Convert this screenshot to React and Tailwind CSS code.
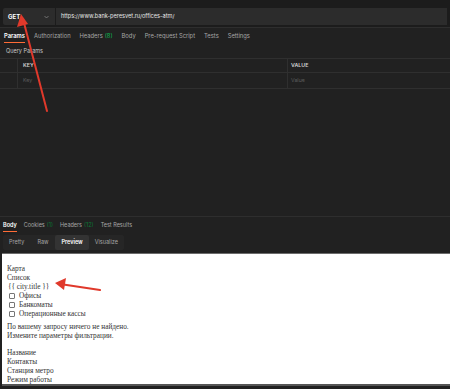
import React from "react";

export default function App() {
  const ui = { fontFamily: "Inter, 'Open Sans', sans-serif" };
  const serif = { fontFamily: "'Liberation Serif', 'DejaVu Serif', serif" };
  return (
    <div className="relative w-[450px] h-[389px] overflow-hidden bg-[#212121] flex flex-col" style={ui}>
      {/* URL bar */}
      <div className="h-[28px] shrink-0 bg-[#1c1c1c] border-b border-[#2e2e2e] px-[3px] pt-[8px]">
        <div className="flex h-[17px] gap-[1px]">
          <div className="w-[52px] bg-[#2c2c2c] rounded-l-[2px] flex items-center justify-between pl-[5px] pr-[6px]">
            <span className="text-[6px] font-bold text-white">GET</span>
            <svg width="5" height="4" viewBox="0 0 10 6" fill="none" stroke="#8a8a8a" strokeWidth="1.5">
              <path d="M1 1l4 4 4-4" />
            </svg>
          </div>
          <div className="flex-1 bg-[#2c2c2c] flex items-center pl-[5px]">
            <span className="text-[5.6px] text-[#e6e6e6]">https://www.bank-peresvet.ru/offices-atm/</span>
          </div>
        </div>
      </div>

      {/* Request tabs */}
      <div className="flex h-[16px] shrink-0 items-stretch gap-[9px] px-[4px] text-[5.8px] text-[#a6a6a6]">
        <div className="relative flex items-center text-white font-semibold">
          Params
          <div className="absolute left-0 right-0 bottom-[1px] h-[1px] bg-[#ff6c37]" />
        </div>
        <div className="flex items-center">Authorization</div>
        <div className="flex items-center">
          Headers<span className="ml-[2px] text-[#0cbb52]">(8)</span>
        </div>
        <div className="flex items-center">Body</div>
        <div className="flex items-center">Pre-request Script</div>
        <div className="flex items-center">Tests</div>
        <div className="flex items-center">Settings</div>
      </div>

      <div className="h-[14px] shrink-0 flex items-center px-[6px] text-[5.5px] text-[#c8c8c8]">Query Params</div>

      {/* Params table */}
      <div className="shrink-0 border-t border-b border-[#2f2f2f] text-[5.3px]">
        <div className="flex h-[14px] border-b border-[#2f2f2f]">
          <div className="w-[18px] border-r border-[#2f2f2f]" />
          <div className="w-[270px] border-r border-[#2f2f2f] flex items-center pl-[5px] font-semibold text-[#d0d0d0]">KEY</div>
          <div className="flex-1 flex items-center pl-[3px] font-semibold text-[#d0d0d0]">VALUE</div>
        </div>
        <div className="flex h-[15px]">
          <div className="w-[18px] border-r border-[#2f2f2f]" />
          <div className="w-[270px] border-r border-[#2f2f2f] flex items-center pl-[5px] text-[#5c5c5c]">Key</div>
          <div className="flex-1 flex items-center pl-[3px] text-[#5c5c5c]">Value</div>
        </div>
      </div>

      <div className="flex-1" />

      {/* Response area */}
      <div className="shrink-0 border-t border-[#2e2e2e] h-[173px] flex flex-col">
        <div className="flex h-[16px] shrink-0 items-stretch gap-[7px] px-[3px] text-[5.5px] text-[#a6a6a6]">
          <div className="relative flex items-center text-white font-semibold">
            Body
            <div className="absolute left-0 right-0 bottom-[1px] h-[1px] bg-[#ff6c37]" />
          </div>
          <div className="flex items-center">
            Cookies<span className="ml-[2px] text-[#0a7a36]">(1)</span>
          </div>
          <div className="flex items-center">
            Headers<span className="ml-[2px] text-[#0a7a36]">(12)</span>
          </div>
          <div className="flex items-center">Test Results</div>
        </div>
        <div className="shrink-0 flex px-[3px] pt-[2px]">
          <div className="flex h-[15px] bg-[#262626] rounded-[2px] text-[5.5px] text-[#a6a6a6]">
            <div className="flex items-center px-[6px]">Pretty</div>
            <div className="flex items-center px-[7px]">Raw</div>
            <div className="flex items-center px-[6px] bg-[#333333] text-white font-semibold rounded-[2px]">Preview</div>
            <div className="flex items-center px-[6px]">Visualize</div>
          </div>
        </div>
        <div className="mt-[3px] ml-[2px] h-[133px] shrink-0 overflow-hidden bg-white border-t border-[#6b6b6b] border-b-[2px] border-b-[#555555] px-[5px] pt-[10px] text-[7.3px] leading-[9px] text-[#333333]" style={serif}>
          <div>Карта</div>
          <div>Список</div>
          <div className="pl-[1px]">{"{{ city.title }}"}</div>
          {["Офисы", "Банкоматы", "Операционные кассы"].map((t) => (
            <div key={t} className="flex items-center h-[9px] pl-[2px]">
              <span className="inline-block w-[6px] h-[6px] border border-[#767676] rounded-[1px] mr-[4px]" />
              {t}
            </div>
          ))}
          <div className="h-[4px]" />
          <div>По вашему запросу ничего не найдено.</div>
          <div>Измените параметры фильтрации.</div>
          <div className="h-[8px]" />
          <div>Название</div>
          <div>Контакты</div>
          <div>Станция метро</div>
          <div>Режим работы</div>
        </div>
      </div>

      {/* Arrows overlay */}
      <svg className="absolute left-0 top-0 pointer-events-none" width="450" height="389" viewBox="0 0 450 389">
        <g stroke="#e0392b" strokeWidth="2" strokeLinecap="round" fill="none">
          <line x1="47" y1="111" x2="23" y2="19" />
          <line x1="100" y1="290" x2="60" y2="284" />
        </g>
        <polygon points="21,14 17,27 28,24" fill="#e0392b" />
        <polygon points="55,283 66,278 64,290" fill="#e0392b" />
      </svg>
    </div>
  );
}
